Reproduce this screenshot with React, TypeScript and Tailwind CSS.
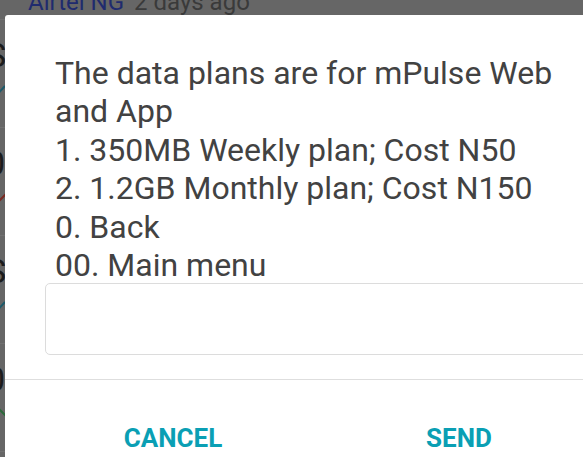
import React from 'react';

const rows = [
  { letter: 'S', mark: 'check', color: '#1d5a6a' },
  { letter: '0', mark: 'down', color: '#7a2a22' },
  { letter: 'S', mark: 'check', color: '#1d5a6a' },
  { letter: '0', mark: 'up', color: '#2c6a3a' },
];

const lines = [
  'The data plans are for mPulse Web',
  'and App',
  '1. 350MB Weekly plan; Cost N50',
  '2. 1.2GB Monthly plan; Cost N150',
  '0. Back',
  '00. Main menu',
];

function Mark({ kind, color }: { kind: string; color: string }) {
  if (kind === 'check') {
    return (
      <svg width="16" height="18" viewBox="0 0 16 18" className="-ml-[9px]">
        <path d="M1 16 L14 2" stroke={color} strokeWidth="2" fill="none" />
      </svg>
    );
  }
  return (
    <svg width="16" height="10" viewBox="0 0 16 10" className="-ml-[9px]">
      <path d={kind === 'down' ? 'M1 2 L8 9 L15 2' : 'M1 8 L8 1 L15 8'} stroke={color} strokeWidth="2" fill="none" />
    </svg>
  );
}

export default function App() {
  return (
    <div
      className="relative w-[583px] h-[457px] overflow-hidden bg-[#666666]"
      style={{ fontFamily: 'Roboto, "Noto Sans", sans-serif' }}
    >
      {/* underlying list, dimmed */}
      <div className="h-[30px] border-b border-[#707070]">
        <div className="pl-[28px] -mt-[10px] flex gap-[10px] text-[24px] leading-[24px]">
          <span className="text-[#1f2b6e]">Airtel NG</span>
          <span className="text-[#3a3a3a]">2 days ago</span>
        </div>
      </div>
      {rows.map((r, i) => (
        <div key={i} className="h-[108px] border-b border-[#707070] flex flex-col">
          <div className="-ml-[14px] mt-[18px] text-[34px] leading-[34px] text-[#1c1c1c]">{r.letter}</div>
          <div className="mt-[12px]">
            <Mark kind={r.mark} color={r.color} />
          </div>
        </div>
      ))}

      {/* dialog */}
      <div className="absolute left-[5px] top-[15px] w-[620px] h-[460px] bg-white rounded-tl-[3px] flex flex-col">
        <div className="pl-[50px] pt-[39px] text-[32px] leading-[38.4px] text-[#424242]">
          {lines.map((l) => (
            <div key={l} className="whitespace-nowrap">{l}</div>
          ))}
        </div>
        <div className="ml-[40px] mt-[-1px] h-[72px] border border-[#dcdcdc] rounded-[5px]" />
        <div className="mt-[24px] border-t border-[#dedede]" />
        <div className="flex pl-[25px] pt-[45px]">
          <div className="w-[286px] text-center text-[26px] leading-[26px] font-bold text-[#0a9fb4]">CANCEL</div>
          <div className="w-[286px] text-center text-[26px] leading-[26px] font-bold text-[#0a9fb4]">SEND</div>
        </div>
      </div>
    </div>
  );
}
